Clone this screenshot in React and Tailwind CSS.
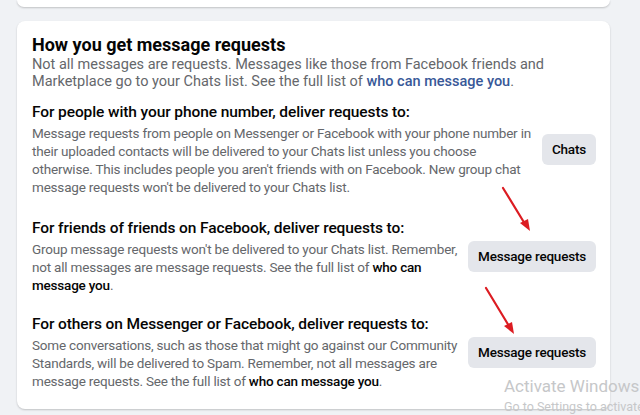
import React from 'react';

const font = { fontFamily: 'Roboto, "Liberation Sans", Arial, sans-serif' };

const Section = ({ title, children, button, className = '' }) => (
  <div className={`flex items-center gap-3 ${className}`}>
    <div className="flex-1 min-w-0">
      <h3 className="text-[15.5px] leading-[20px] tracking-[-0.1px] font-medium text-[#050505] whitespace-nowrap">{title}</h3>
      <p className="mt-[2px] text-[13.5px] leading-[18px] tracking-[-0.2px] text-[#65676b] whitespace-nowrap">{children}</p>
    </div>
    <button className="shrink-0 h-[31px] px-[10px] rounded-md bg-[#e4e6eb] text-[13.5px] tracking-[-0.2px] font-medium text-[#050505] whitespace-nowrap">
      {button}
    </button>
  </div>
);

const Bold = ({ children }) => <span className="font-medium text-[#050505]">{children}</span>;

export default function App() {
  return (
    <div className="relative w-[640px] h-[415px] overflow-hidden bg-[#f0f2f5]" style={font}>
      <div className="pl-[17px] w-[610px]">
        {/* bottom of the previous card */}
        <div className="h-[7px] rounded-b-lg bg-white shadow-[0_1px_2px_rgba(0,0,0,0.2)]" />

        <div className="mt-[14px] rounded-lg bg-white shadow-[0_1px_2px_rgba(0,0,0,0.2)] pt-[13px] pb-[19px] pl-[15px] pr-[14px]">
          <h2 className="text-[18px] leading-[22px] font-bold text-[#050505]">How you get message requests</h2>
          <p className="text-[14.5px] leading-[17px] text-[#65676b] whitespace-nowrap">
            Not all messages are requests. Messages like those from Facebook friends and
            <br />
            Marketplace go to your Chats list. See the full list of{' '}
            <span className="text-[#385898] font-medium">who can message you</span>.
          </p>

          <Section className="mt-[12px]" title="For people with your phone number, deliver requests to:" button="Chats">
            Message requests from people on Messenger or Facebook with your phone number in
            <br />
            their uploaded contacts will be delivered to your Chats list unless you choose
            <br />
            otherwise. This includes people you aren't friends with on Facebook. New group chat
            <br />
            message requests won't be delivered to your Chats list.
          </Section>

          <Section className="mt-[22px]" title="For friends of friends on Facebook, deliver requests to:" button="Message requests">
            Group message requests won't be delivered to your Chats list. Remember,
            <br />
            not all messages are message requests. See the full list of <Bold>who can</Bold>
            <br />
            <Bold>message you</Bold>.
          </Section>

          <Section className="mt-[20px]" title="For others on Messenger or Facebook, deliver requests to:" button="Message requests">
            Some conversations, such as those that might go against our Community
            <br />
            Standards, will be delivered to Spam. Remember, not all messages are
            <br />
            message requests. See the full list of <Bold>who can message you</Bold>.
          </Section>
        </div>
      </div>

      {/* red annotation arrows */}
      <svg className="absolute inset-0 pointer-events-none" width="640" height="415" viewBox="0 0 640 415">
        <g stroke="#dc1c22" strokeWidth="2.2" fill="#dc1c22" strokeLinecap="round">
          <line x1="503" y1="188" x2="525" y2="224" />
          <polygon points="530,231 520,223 528,219" stroke="none" />
          <line x1="486" y1="288" x2="509" y2="326" />
          <polygon points="514,334 504,326 512,322" stroke="none" />
        </g>
      </svg>

      {/* windows watermark */}
      <div className="absolute left-[504px] top-[376px] pointer-events-none whitespace-nowrap text-[#c6c7c9]">
        <div className="text-[17px] leading-[20px]">Activate Windows</div>
        <div className="text-[12.5px] leading-[16px] mt-[3px]">Go to Settings to activate Windows.</div>
      </div>
    </div>
  );
}
